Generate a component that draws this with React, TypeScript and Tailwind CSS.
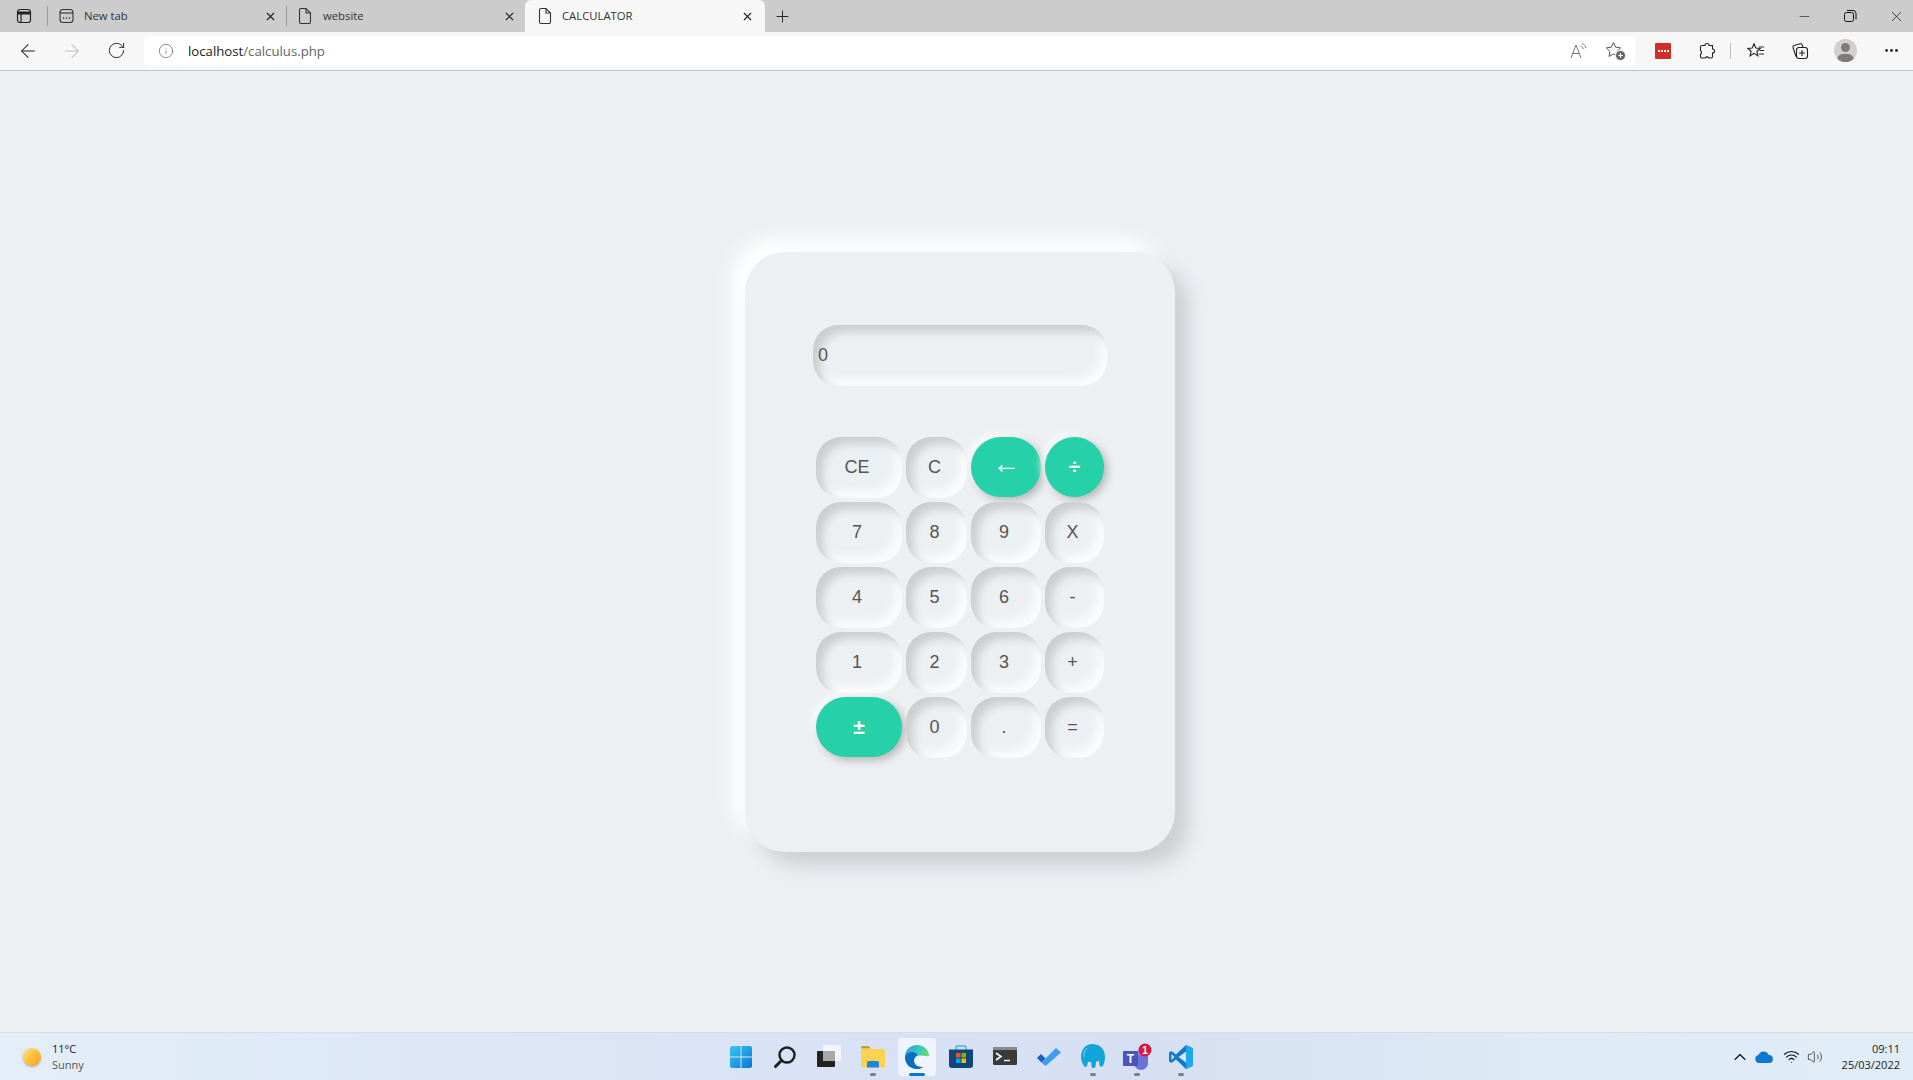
import { ArrowLeft, ArrowRight, ChevronUp, Info, Minus, MoreHorizontal, Plus, RotateCw, Volume2, Wifi, X } from 'lucide-react';

const keys = [
  { label: 'CE' }, { label: 'C' }, { label: '←', accent: true }, { label: '÷', accent: true },
  { label: '7' }, { label: '8' }, { label: '9' }, { label: 'X' },
  { label: '4' }, { label: '5' }, { label: '6' }, { label: '-' },
  { label: '1' }, { label: '2' }, { label: '3' }, { label: '+' },
  { label: '±', accent: true }, { label: '0' }, { label: '.' }, { label: '=' },
];

function PageIcon() {
  return (
    <svg width="14" height="18" viewBox="0 0 14 18" fill="none" stroke="#333" strokeWidth="1.1">
      <path d="M3 1.5h5l4.5 4.5v9a1.5 1.5 0 0 1-1.5 1.5H3A1.5 1.5 0 0 1 1.5 15V3A1.5 1.5 0 0 1 3 1.5z" />
      <path d="M8 1.5V6h4.5" />
    </svg>
  );
}

function Tab({ icon, title, active }: { icon: React.ReactNode; title: string; active?: boolean }) {
  return (
    <div className={`flex h-full items-center rounded-t-[6px] ${active ? 'w-[240px] bg-[#f7f7f7] pl-[13px] pr-[11px]' : 'w-[238px] pl-[11px] pr-[9px]'}`}>
      <span className={`flex shrink-0 justify-start ${active ? 'w-[24px]' : 'w-[25px]'}`}>{icon}</span>
      <span className="flex-1 text-[11.3px] text-[#333]">{title}</span>
      <X size={13} strokeWidth={2} color="#222" />
    </div>
  );
}

function Key({ label, accent }: { label: string; accent?: boolean }) {
  if (accent) {
    return (
      <button className={`h-[60px] w-full rounded-[30px] bg-[#26d0a9] text-white shadow-[3px_3px_8px_#b1b1b1,-3px_-3px_8px_#ffffff] ${label === '←' ? 'pb-[5px] text-[28px] font-normal leading-none' : 'text-[21px] font-bold'}`}>
        {label}
      </button>
    );
  }
  return (
    <button className="h-[61px] w-full rounded-[25px] bg-[#ecf0f3] pr-[4px] text-[18px] text-[#555] shadow-[inset_7px_7px_9px_#cbced1,inset_-7px_-7px_9px_#fafbfc]">
      {label}
    </button>
  );
}

function TaskIcon({ children, dot, active }: { children: React.ReactNode; dot?: boolean; active?: boolean }) {
  return (
    <div className="relative flex h-[48px] w-[44px] items-center justify-center">
      {active && <div className="absolute left-[3px] top-[5px] h-[38px] w-[38px] rounded-[4px] bg-white/60" />}
      <div className="relative flex">{children}</div>
      {dot && <div className="absolute bottom-[5px] left-[19px] h-[3px] w-[6px] rounded-full bg-[#7b7f87]" />}
      {active && <div className="absolute bottom-[5px] left-[14px] h-[3px] w-[16px] rounded-full bg-[#0078d4]" />}
    </div>
  );
}

export default function App() {
  return (
    <div className="flex h-screen flex-col overflow-hidden bg-[#ecf0f3] font-['Open_Sans',sans-serif]">
      {/* tab strip */}
      <div className="flex h-[32px] shrink-0 items-center bg-[#cccccc]">
        <div className="flex w-[47px] justify-center">
          <svg width="16" height="16" viewBox="0 0 16 16" fill="none" stroke="#222" strokeWidth="1.2">
            <rect x="1.5" y="1.5" width="13" height="13" rx="2.5" />
            <path d="M1.5 5h13" strokeWidth="3" />
            <path d="M5 5v9" />
          </svg>
        </div>
        <div className="h-[20px] w-px bg-[#9a9a9a]" />
        <Tab
          title="New tab"
          icon={
            <svg width="15" height="16" viewBox="0 0 15 16" fill="none" stroke="#333" strokeWidth="1.1">
              <rect x="1" y="1.5" width="13" height="13" rx="3" />
              <path d="M1 5h13" />
              <path d="M4 10h1.2M7 10h1.2M10 10h1.2" strokeWidth="1.5" />
            </svg>
          }
        />
        <div className="h-[20px] w-px bg-[#9a9a9a]" />
        <Tab title="website" icon={<PageIcon />} />
        <Tab title="CALCULATOR" icon={<PageIcon />} active />
        <div className="flex w-[34px] justify-center">
          <Plus size={19} strokeWidth={1.2} color="#222" />
        </div>
        <div className="ml-auto flex items-center gap-[31px] pr-[8px]">
          <Minus size={15} strokeWidth={1} color="#111" />
          <svg width="14" height="14" viewBox="0 0 14 14" fill="none" stroke="#111" strokeWidth="1">
            <rect x="1.5" y="3.5" width="9" height="9" rx="2" />
            <path d="M4 1.5h6a3 3 0 0 1 3 3v6" />
          </svg>
          <X size={17} strokeWidth={1} color="#111" />
        </div>
      </div>

      {/* toolbar */}
      <div className="flex h-[39px] shrink-0 items-center border-b border-[#c4c4c4] bg-[#f7f7f7] pb-px">
        <div className="flex w-[144px] items-center pl-[17px]">
          <ArrowLeft size={22} strokeWidth={1.1} color="#222" />
          <ArrowRight size={22} strokeWidth={1.1} color="#bbb" className="ml-[22px]" />
          <RotateCw size={19} strokeWidth={1.2} color="#222" className="ml-[24px]" />
        </div>
        <div className="flex h-[30px] w-[1491px] items-center rounded-[5px] bg-white pl-[14px] pr-[9px]">
          <Info size={16} strokeWidth={1} color="#555" />
          <span className="ml-[14px] mt-[2px] text-[13.2px] text-[#222]">
            localhost<span className="text-[#666]">/calculus.php</span>
          </span>
          <div className="ml-auto flex items-center gap-[17px]">
            <svg width="18" height="16" viewBox="0 0 18 16" fill="none" stroke="#777" strokeWidth="1">
              <path d="M1 15 6 2l5 13M2.7 10.5h6.6" />
              <path d="M10.5 3c1.6.4 2.5 1.5 2.8 3M12 .8c2.3.5 3.700 2.200 4 4.400" />
            </svg>
            <svg width="21" height="20" viewBox="0 0 21 20" fill="none" stroke="#555" strokeWidth="1">
              <path d="M8.500 1.500l2.200 4.700 5 .7-3.600 3.500.9 5-4.500-2.400-4.500 2.400.9-5L1.300 6.900l5-.7z" />
              <circle cx="15.500" cy="14.500" r="5" fill="#666" stroke="#f7f7f7" />
              <path d="M15.500 12.200v4.600M13.200 14.500h4.600" stroke="#fff" strokeWidth="1.200" />
            </svg>
          </div>
        </div>
        <div className="ml-[20px] flex h-[16px] w-[16px] items-center justify-center rounded-[1px] bg-[#d32d27]">
          <span className="block h-[2px] w-[11px] [background:repeating-linear-gradient(90deg,#fff_0_2px,transparent_2px_3px)]" />
        </div>
        <svg width="18" height="18" viewBox="0 0 18 18" fill="none" stroke="#222" strokeWidth="1.1" className="ml-[27px]">
          <path d="M7 3.500a2 2 0 0 1 4 0h3.500V7a2 2 0 0 1 0 4v3.500a1.500 1.500 0 0 1-1.500 1.500h-2.200a2 2 0 0 0-3.600 0H4a1.500 1.500 0 0 1-1.500-1.500v-2.200a2 2 0 0 0 0-3.600V5A1.500 1.500 0 0 1 4 3.500z" />
        </svg>
        <div className="ml-[14px] h-[16px] w-px bg-[#bdbdbd]" />
        <svg width="18" height="18" viewBox="0 0 18 18" fill="none" stroke="#222" strokeWidth="1.1" className="ml-[16px]">
          <path d="M7 1.800 8.800 6l4.400.4-3.300 2.900 1 4.500L7 11.400l-3.900 2.400 1-4.500L.8 6.400 5.200 6z" />
          <path d="M12 5h5M12.500 8.500H17M12 12h5" />
        </svg>
        <svg width="18" height="18" viewBox="0 0 18 18" fill="none" stroke="#222" strokeWidth="1.1" className="ml-[26px]">
          <path d="M5 14.500 2 5.500c-.3-1 .2-1.700 1-2L9 1.800c1-.3 1.800.2 2.100 1L12 5" />
          <rect x="5.500" y="5.500" width="11" height="11" rx="2.500" />
          <path d="M11 8v6M8 11h6" />
        </svg>
        <div className="relative ml-[25px] h-[23px] w-[23px] overflow-hidden rounded-full bg-[#d2cfcc]">
          <div className="absolute left-[7px] top-[4px] h-[9px] w-[9px] rounded-full bg-[#7f7b78]" />
          <div className="absolute left-[3px] top-[15px] h-[12px] w-[17px] rounded-full bg-[#7f7b78]" />
        </div>
        <MoreHorizontal size={17} strokeWidth={2} color="#222" className="ml-[26px]" />
      </div>

      {/* page */}
      <main className="flex flex-1 items-center justify-center pl-[7px]">
        <div className="flex h-[600px] w-[430px] flex-col items-center rounded-[40px] bg-[#ecf0f3] pt-[73px] shadow-[13px_13px_20px_#cbced1,-13px_-13px_20px_#ffffff]">
          <input
            readOnly
            value="0"
            className="h-[61px] w-[294px] rounded-[25px] bg-[#ecf0f3] pl-[5px] font-['Liberation_Sans',sans-serif] text-[18px] text-[#555] shadow-[inset_7px_7px_9px_#cbced1,inset_-7px_-7px_9px_#fafbfc] outline-none"
          />
          <div className="mt-[51px] grid grid-cols-[86px_61px_70px_59px] auto-rows-[61px] gap-[4px] font-['Liberation_Sans',sans-serif]">
            {keys.map((k) => (
              <Key key={k.label} label={k.label} accent={k.accent} />
            ))}
          </div>
        </div>
      </main>

      {/* taskbar */}
      <footer className="flex h-[48px] shrink-0 items-center border-t border-[#d5dde9] bg-[linear-gradient(90deg,#e3eef9_0%,#d9e3f5_40%,#d6e0f2_60%,#deeaf5_80%,#e0ecf6_100%)]">
        <div className="flex w-[719px] items-center pl-[23px]">
          <div className="h-[18px] w-[18px] rounded-full bg-[linear-gradient(135deg,#ffe27a,#ff9d0a)] shadow-[0_1px_2px_#9aa4b0]" />
          <div className="ml-[11px] text-[11px] leading-[16px]">
            <div className="text-[#1a1a1a]">11°C</div>
            <div className="text-[#555]">Sunny</div>
          </div>
        </div>
        <div className="flex">
          <TaskIcon>
            <svg width="24" height="24" viewBox="0 0 24 24">
              <defs>
                <linearGradient id="win" x1="0" y1="0" x2="1" y2="1">
                  <stop offset="0" stopColor="#38c6f4" />
                  <stop offset="1" stopColor="#0a78d6" />
                </linearGradient>
              </defs>
              <path d="M1 2.500 2.500 1H11.500V11.500H1zM12.500 1h9L23 2.500v9H12.500zM1 12.500h10.500V23H2.500L1 21.500zM12.500 12.500H23v9L21.500 23h-9z" fill="url(#win)" />
            </svg>
          </TaskIcon>
          <TaskIcon>
            <svg width="24" height="24" viewBox="0 0 24 24" fill="none" stroke="#1f1f1f">
              <circle cx="14" cy="10" r="7.500" strokeWidth="2.400" />
              <path d="M8.500 15.500 2.500 21.500" strokeWidth="3" strokeLinecap="round" />
            </svg>
          </TaskIcon>
          <TaskIcon>
            <svg width="24" height="24" viewBox="0 0 24 24">
              <rect x="6" y="0" width="18" height="16" rx="1" fill="#f4f5f8" />
              <rect x="0" y="6" width="18" height="16" rx="1" fill="#222" />
              <rect x="6" y="6" width="12" height="10" fill="#a8a8a8" />
            </svg>
          </TaskIcon>
          <TaskIcon dot>
            <svg width="24" height="24" viewBox="0 0 24 24">
              <path d="M0 2.500A1.500 1.500 0 0 1 1.500 1h6L10 3.500H0z" fill="#d39a1c" />
              <path d="M0 4h22.500A1.500 1.500 0 0 1 24 5.500V21a1.500 1.500 0 0 1-1.500 1.500h-21A1.500 1.500 0 0 1 0 21z" fill="#fcd34f" />
              <path d="M6 18a2 2 0 0 1 2-2h8a2 2 0 0 1 2 2v4.500H6z" fill="#1b86d8" />
            </svg>
          </TaskIcon>
          <TaskIcon active>
            <svg width="24" height="24" viewBox="0 0 24 24">
              <defs>
                <linearGradient id="edge" x1="0" y1="0" x2="1" y2="0.600">
                  <stop offset="0" stopColor="#1f9fe0" />
                  <stop offset="0.500" stopColor="#36c9c0" />
                  <stop offset="1" stopColor="#7ce05e" />
                </linearGradient>
              </defs>
              <path d="M12 0C5 0 0 5.400 0 12c0 7 5.500 12 11.500 12 2.500 0 5-.8 7-2.300-4 1-9-.8-9.500-5.700-.3-3 2-5.500 5-5.500 4 0 10 1.500 10 0C24 5 18.500 0 12 0z" fill="url(#edge)" />
              <path d="M0 12c0 7 5.500 12 11.500 12 2.500 0 5-.8 7-2.300-4 1-9-.8-9.500-5.700-.2-2.500 1.500-5 3.500-5.500-1-3-4-3.500-6-3.500S1 9 0 12z" fill="#0c6cbd" />
            </svg>
          </TaskIcon>
          <TaskIcon>
            <svg width="24" height="24" viewBox="0 0 24 24">
              <path d="M7 5V2.500A1.500 1.500 0 0 1 8.500 1h7A1.500 1.500 0 0 1 17 2.500V5" fill="none" stroke="#35b8ee" strokeWidth="1.500" />
              <path d="M0 4.500h24V20a3 3 0 0 1-3 3H3a3 3 0 0 1-3-3z" fill="#10467a" />
              <rect x="7" y="8" width="4.500" height="4.500" fill="#f25022" />
              <rect x="12.500" y="8" width="4.500" height="4.500" fill="#7fba00" />
              <rect x="7" y="13.500" width="4.500" height="4.500" fill="#00a4ef" />
              <rect x="12.500" y="13.500" width="4.500" height="4.500" fill="#ffb900" />
            </svg>
          </TaskIcon>
          <TaskIcon>
            <svg width="24" height="20" viewBox="0 0 24 20">
              <rect x="0" y="0" width="24" height="18" rx="1.500" fill="#3a3a3a" />
              <rect x="0" y="0" width="24" height="3" fill="#8a8a8a" />
              <path d="M3 6l5 3.500L3 13" fill="none" stroke="#fff" strokeWidth="1.600" />
              <path d="M11 13.500h6" stroke="#fff" strokeWidth="1.400" />
            </svg>
          </TaskIcon>
          <TaskIcon>
            <svg width="24" height="20" viewBox="0 0 24 20">
              <path d="M0 11l4-4 4.500 4.500-4 4z" fill="#1c5fc2" />
              <path d="M4.500 15.500 19 1l5 4.500L8.500 19z" fill="#3f9df0" />
            </svg>
          </TaskIcon>
          <TaskIcon dot>
            <svg width="24" height="25" viewBox="0 0 24 25">
              <path d="M11 0c7 0 13 4 13 13 0 4-1 7-2.500 9.500-1.500.5-2.500 0-3-1l-.5-5c-1 .8-2 1.200-3 1.200 0 2.800-.5 4.800-1.500 6.300h-2.500c-.6-2-.8-4-.8-6-1.500.2-2.500 0-3.200-.5-.2 2.500-1 4.500-2.500 6C1.500 21 0 17 0 12.500 0 5 5 0 11 0z" fill="#12a5d8" />
              <path d="M6 4c-2.500 2-3.500 5-3 9" fill="none" stroke="#7ad0ee" strokeWidth="1" />
            </svg>
          </TaskIcon>
          <TaskIcon dot>
            <svg width="30" height="28" viewBox="0 0 30 28">
              <circle cx="20.500" cy="9.500" r="4.500" fill="#7b83eb" />
              <path d="M12 12h14v8a7 7 0 0 1-14 0z" fill="#6b73d8" />
              <rect x="1" y="8" width="15" height="15" rx="1" fill="#4b53bc" />
              <text x="8.500" y="20" textAnchor="middle" fontSize="12" fontWeight="700" fill="#fff" fontFamily="Liberation Sans, sans-serif">T</text>
              <circle cx="23" cy="7" r="6.500" fill="#d8193c" />
              <text x="23" y="11" textAnchor="middle" fontSize="10" fontWeight="700" fill="#fff" fontFamily="Liberation Sans, sans-serif">1</text>
            </svg>
          </TaskIcon>
          <TaskIcon dot>
            <svg width="24" height="24" viewBox="0 0 24 24">
              <path d="M17 0 24 3.300V20.700L17 24 7 14.500 2.500 18 0 16.500V7.500L2.500 6 7 9.500z" fill="#0c7cc8" />
              <path d="M17 0 24 3.300V20.700L17 24z" fill="#22a7ef" />
              <path d="M17 6.500v11L9.500 12z" fill="#dbe4f5" />
              <path d="M2.500 9v6L5.500 12z" fill="#dbe4f5" />
            </svg>
          </TaskIcon>
        </div>
        <div className="ml-auto flex items-center pr-[13px]">
          <ChevronUp size={20} strokeWidth={1.4} color="#111" />
          <svg width="18" height="12" viewBox="0 0 18 12" className="ml-[5px]">
            <path d="M4 12a4 4 0 0 1-.5-7.900A5.500 5.500 0 0 1 13.800 4 4 4 0 0 1 14 12z" fill="#0f78d4" />
          </svg>
          <Wifi size={17} strokeWidth={1.5} color="#111" className="ml-[10px]" />
          <Volume2 size={16} strokeWidth={1.1} color="#222" className="ml-[7px]" />
          <div className="ml-[19px] text-right text-[11px] leading-[16px] text-[#1a1a1a]">
            <div>09:11</div>
            <div>25/03/2022</div>
          </div>
        </div>
      </footer>
    </div>
  );
}
